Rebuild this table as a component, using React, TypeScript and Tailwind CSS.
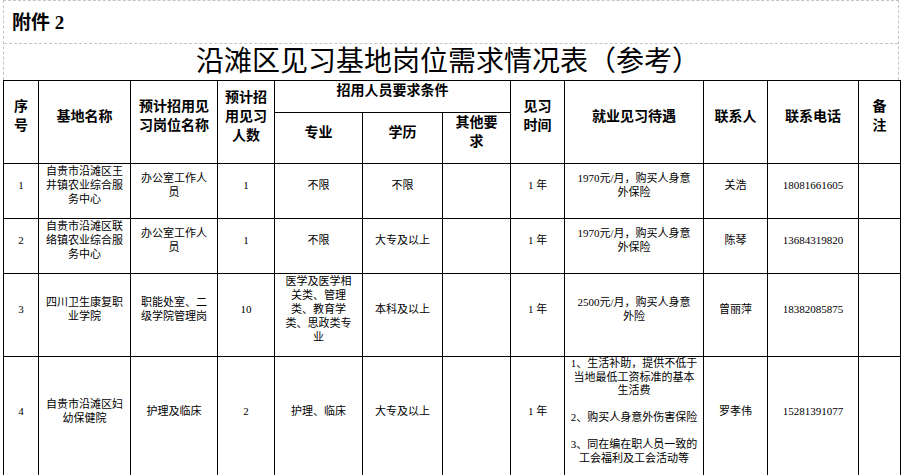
import React from "react";

const th =
  "border border-black text-center align-middle font-bold text-[14px] leading-[19px] pt-0 pb-[12px] px-0 whitespace-nowrap";
const td =
  "border border-black text-center align-middle text-[11px] leading-[14px] pt-0 pb-[12px] px-1 whitespace-nowrap font-normal";

type Row = {
  no: string;
  name: React.ReactNode;
  post: React.ReactNode;
  count: string;
  major: React.ReactNode;
  edu: string;
  time: string;
  pay: React.ReactNode;
  contact: string;
  phone: string;
  h: string;
};

const rows: Row[] = [
  {
    no: "1",
    name: (
      <>
        自贵市沿滩区王
        <br />
        井镇农业综合服
        <br />
        务中心
      </>
    ),
    post: (
      <>
        办公室工作人
        <br />员
      </>
    ),
    count: "1",
    major: "不限",
    edu: "不限",
    time: "1 年",
    pay: (
      <>
        1970元/月，购买人身意
        <br />
        外保险
      </>
    ),
    contact: "关浩",
    phone: "18081661605",
    h: "h-[54px]",
  },
  {
    no: "2",
    name: (
      <>
        自贵市沿滩区联
        <br />
        络镇农业综合服
        <br />
        务中心
      </>
    ),
    post: (
      <>
        办公室工作人
        <br />员
      </>
    ),
    count: "1",
    major: "不限",
    edu: "大专及以上",
    time: "1 年",
    pay: (
      <>
        1970元/月，购买人身意
        <br />
        外保险
      </>
    ),
    contact: "陈琴",
    phone: "13684319820",
    h: "h-[55px]",
  },
  {
    no: "3",
    name: (
      <>
        四川卫生康复职
        <br />
        业学院
      </>
    ),
    post: (
      <>
        职能处室、二
        <br />
        级学院管理岗
      </>
    ),
    count: "10",
    major: (
      <>
        医学及医学相
        <br />
        关类、管理
        <br />
        类、教育学
        <br />
        类、思政类专
        <br />业
      </>
    ),
    edu: "本科及以上",
    time: "1 年",
    pay: (
      <>
        2500元/月，购买人身意
        <br />
        外险
      </>
    ),
    contact: "曾丽萍",
    phone: "18382085875",
    h: "h-[82px]",
  },
  {
    no: "4",
    name: (
      <>
        自贵市沿滩区妇
        <br />
        幼保健院
      </>
    ),
    post: "护理及临床",
    count: "2",
    major: "护理、临床",
    edu: "大专及以上",
    time: "1 年",
    pay: (
      <div className="leading-[13.5px]">
        1、生活补助，提供不低于
        <br />
        当地最低工资标准的基本
        <br />
        生活费
        <br />
        &nbsp;
        <br />
        2、购买人身意外伤害保险
        <br />
        &nbsp;
        <br />
        3、同在编在职人员一致的
        <br />
        工会福利及工会活动等
      </div>
    ),
    contact: "罗孝伟",
    phone: "15281391077",
    h: "h-[120px]",
  },
];

export default function App() {
  return (
    <div className="w-[901px] h-[475px] overflow-hidden bg-white text-black font-['Liberation_Serif','Noto_Sans_CJK_SC',serif]">
      <div className="ml-[3px] w-[896px] border-x border-t border-dashed border-[#c4c4c4]">
        <div className="h-[43px] border-b border-dashed border-[#c4c4c4] flex items-center pl-[8px] text-[19px] font-bold leading-none">
          附件 2
        </div>
        <div className="h-[36px] flex items-center justify-center text-[28px] leading-none pr-[6px]">
          沿滩区见习基地岗位需求情况表（参考）
        </div>
      </div>
      <table className="ml-[3px] w-[897px] table-fixed border-collapse">
        <colgroup>
          <col className="w-[35px]" />
          <col className="w-[92px]" />
          <col className="w-[87px]" />
          <col className="w-[57px]" />
          <col className="w-[88px]" />
          <col className="w-[80px]" />
          <col className="w-[68px]" />
          <col className="w-[54px]" />
          <col className="w-[139px]" />
          <col className="w-[64px]" />
          <col className="w-[91px]" />
          <col className="w-[42px]" />
        </colgroup>
        <thead>
          <tr className="h-[31px]">
            <th rowSpan={2} className={th}>
              序<br />号
            </th>
            <th rowSpan={2} className={th}>
              基地名称
            </th>
            <th rowSpan={2} className={th}>
              预计招用见
              <br />
              习岗位名称
            </th>
            <th rowSpan={2} className={th}>
              预计招
              <br />
              用见习
              <br />
              人数
            </th>
            <th colSpan={3} className={th}>
              招用人员要求条件
            </th>
            <th rowSpan={2} className={th}>
              见习
              <br />
              时间
            </th>
            <th rowSpan={2} className={th}>
              就业见习待遇
            </th>
            <th rowSpan={2} className={th}>
              联系人
            </th>
            <th rowSpan={2} className={th}>
              联系电话
            </th>
            <th rowSpan={2} className={th}>
              备<br />注
            </th>
          </tr>
          <tr className="h-[49px]">
            <th className={th}>专业</th>
            <th className={th}>学历</th>
            <th className={th}>
              其他要
              <br />求
            </th>
          </tr>
        </thead>
        <tbody>
          {rows.map((r) => (
            <tr key={r.no} className={r.h}>
              <td className={td}>{r.no}</td>
              <td className={td}>{r.name}</td>
              <td className={td}>{r.post}</td>
              <td className={td}>{r.count}</td>
              <td className={td}>{r.major}</td>
              <td className={td}>{r.edu}</td>
              <td className={td}></td>
              <td className={td}>{r.time}</td>
              <td className={td}>{r.pay}</td>
              <td className={td}>{r.contact}</td>
              <td className={td}>{r.phone}</td>
              <td className={td}></td>
            </tr>
          ))}
        </tbody>
      </table>
    </div>
  );
}
